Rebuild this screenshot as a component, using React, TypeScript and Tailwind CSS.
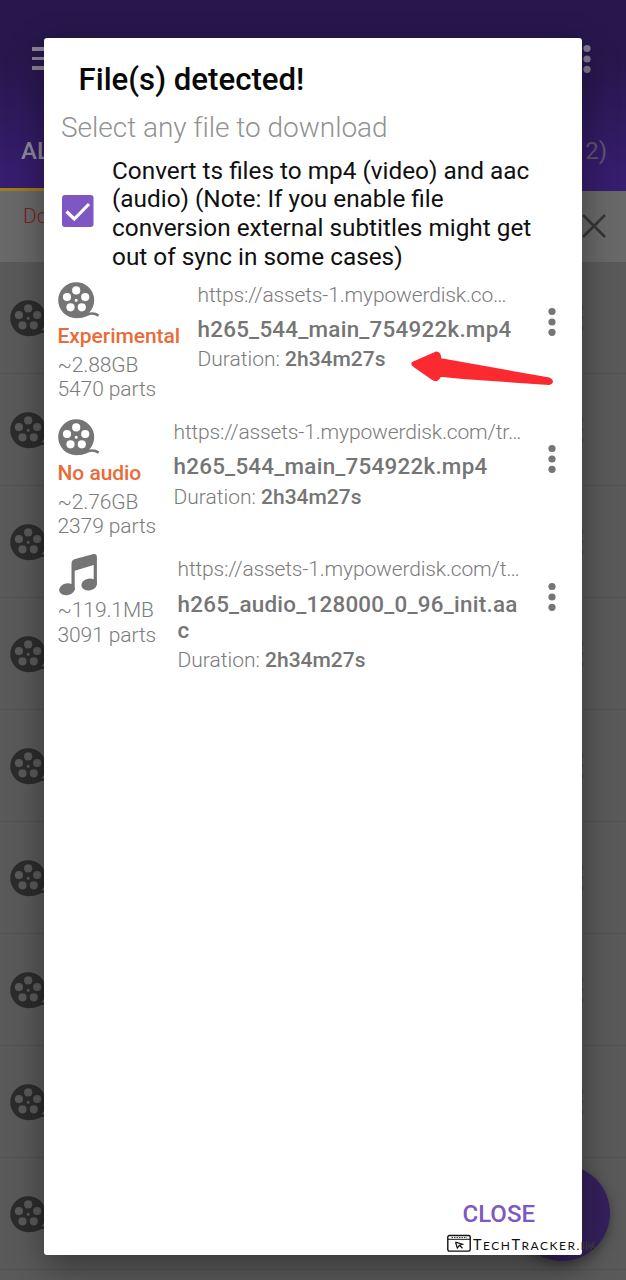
import React from "react";

function Reel({ className }: { className: string }) {
  return (
    <svg viewBox="0 0 42 38" className={className} fill="currentColor">
      <path
        fillRule="evenodd"
        d="M18.2 0.2a18 18 0 1 0 0 36a18 18 0 1 0 0-36ZM18.2 4.3a4.100 4.100 0 1 1 0 8.200a4.100 4.100 0 1 1 0-8.200ZM9 11a4.100 4.100 0 1 1 0 8.200a4.100 4.100 0 1 1 0-8.200ZM27.200 11a4.100 4.100 0 1 1 0 8.200a4.100 4.100 0 1 1 0-8.200ZM12.500 21.200a4.100 4.100 0 1 1 0 8.200a4.100 4.100 0 1 1 0-8.200ZM23.800 21.200a4.100 4.100 0 1 1 0 8.200a4.100 4.100 0 1 1 0-8.200ZM18.200 16.700a1.500 1.500 0 1 1 0 3a1.500 1.500 0 1 1 0-3Z"
      />
      <path d="M18 34.7C26 35.5 29 31.600 34 31.600C37 31.600 38.500 32.200 40.600 33.600" fill="none" stroke="currentColor" strokeWidth="2.5" />
    </svg>
  );
}

function MusicNote() {
  return (
    <svg viewBox="0 0 40 44" className="block h-11 w-10" fill="currentColor">
      <path d="M13.5 9Q13.6 6.300 16.2 5.300L35.600 0Q38.900-.5 38.900 2.800V30.500h-3.200V11L16.7 16.700V36h-3.2Z" />
      <ellipse cx="9" cy="35.300" rx="7.9" ry="5.9" transform="rotate(-12 9 35.300)" />
      <ellipse cx="31.200" cy="30.500" rx="7.9" ry="5.9" transform="rotate(-12 31.200 30.500)" />
    </svg>
  );
}

function Dots({ className }: { className: string }) {
  return (
    <svg viewBox="0 0 8 30" className={className} fill="currentColor">
      <circle cx="4" cy="4.5" r="3.6" />
      <circle cx="4" cy="15" r="3.6" />
      <circle cx="4" cy="25.3" r="3.6" />
    </svg>
  );
}

interface Item {
  kind: "video" | "audio";
  tag?: string;
  size: string;
  parts: string;
  url: string;
  name: string[];
  col: string;
}

const items: Item[] = [
  {
    kind: "video",
    tag: "Experimental",
    size: "~2.88GB",
    parts: "5470 parts",
    url: "https://assets-1.mypowerdisk.co…",
    name: ["h265_544_main_754922k.mp4"],
    col: "w-[140px]",
  },
  {
    kind: "video",
    tag: "No audio",
    size: "~2.76GB",
    parts: "2379 parts",
    url: "https://assets-1.mypowerdisk.com/tr…",
    name: ["h265_544_main_754922k.mp4"],
    col: "w-[116px]",
  },
  {
    kind: "audio",
    size: "~119.1MB",
    parts: "3091 parts",
    url: "https://assets-1.mypowerdisk.com/t…",
    name: ["h265_audio_128000_0_96_init.aa", "c"],
    col: "w-[120px]",
  },
];

function FileRow({ item }: { item: Item }) {
  return (
    <div className="flex h-[137.3px] pl-[14px] text-[21px] font-light text-[#7b7b7b]">
      <div className={`shrink-0 whitespace-nowrap leading-[24.5px] tracking-[-0.1px] ${item.col}`}>
        {item.kind === "video" ? (
          <Reel className="block h-[38px] w-[42px] text-[#757575]" />
        ) : (
          <div className="-mt-[2px] h-[44px] text-[#757575]">
            <MusicNote />
          </div>
        )}
        {item.tag && (
          <div className="mt-[4px] mb-[4.5px] font-medium tracking-[-0.05px] text-[#ea6b3a]">{item.tag}</div>
        )}
        <div>{item.size}</div>
        <div>{item.parts}</div>
      </div>
      <div className="min-w-0 flex-1 whitespace-nowrap">
        <div className="leading-[26px] tracking-[-0.15px]">{item.url}</div>
        <div className="mt-[8.5px] text-[22.4px] font-medium leading-[26.3px] tracking-[0.25px] text-[#757575]">
          {item.name.map((line) => (
            <div key={line}>{line}</div>
          ))}
        </div>
        <div className="mt-[4px] leading-[26px]">
          Duration: <span className="font-medium text-[#757575]">2h34m27s</span>
        </div>
      </div>
      <Dots className="mt-[25.5px] mr-[26px] h-[30px] w-2 shrink-0 text-[#757575]" />
    </div>
  );
}

function Background() {
  return (
    <div className="flex h-full flex-col">
      <header className="flex h-[191px] shrink-0 flex-col bg-linear-to-b from-[#27174c] from-30% to-[#371d6e] to-90%">
        <div className="h-[37px]" />
        <div className="flex h-[84px] items-start justify-between pt-[7px] pr-[35px] pl-8">
          <div className="mt-[3px] flex w-9 flex-col gap-[6px]">
            <i className="h-[3.5px] bg-[#8c8699]" />
            <i className="h-[3.5px] bg-[#8c8699]" />
            <i className="h-[3.5px] bg-[#8c8699]" />
          </div>
          <Dots className="h-[30px] w-2 text-[#827c90]" />
        </div>
        <div className="flex h-[67px] items-start justify-between pt-[14px] pr-[19px] pl-[21px] text-[24px] font-medium leading-[32px]">
          <span className="text-[#8f8b99]">ALL</span>
          <span className="font-normal text-[#61556e]">2)</span>
        </div>
        <div className="h-[3px] w-[120px] bg-[#a17a1d]" />
      </header>
      <div className="flex h-[71px] shrink-0 justify-between bg-[#696969] pt-3 pr-[19px] pl-[23px] text-[21px] font-light leading-[26px] text-[#831d1d]">
        <span>Download</span>
        <svg viewBox="0 0 26 26" className="mt-[10px] h-[26px] w-[26px]" stroke="#363636" strokeWidth="2.6">
          <path d="M2 2L24 24M24 2L2 24" />
        </svg>
      </div>
      {Array.from({ length: 10 }, (_, i) => (
        <div
          key={i}
          className="flex h-28 shrink-0 items-start justify-between border-b border-[#525252] bg-[#5a5a5a] pt-[38px] pr-[43px] pl-[10px] text-[#2c2c2c]"
        >
          <Reel className="h-[38px] w-[42px]" />
          <Dots className="mt-[3px] h-[30px] w-2" />
        </div>
      ))}
    </div>
  );
}

export default function App() {
  return (
    <div className="relative h-[1280px] w-[626px] overflow-hidden bg-[#5a5a5a] font-['Roboto',sans-serif]">
      <Background />
      <div className="absolute top-[1165px] left-[514px] h-24 w-24 rounded-full bg-[#36205d] shadow-[0_4px_12px_rgba(0,0,0,0.35)]" />
      <section className="absolute top-[38px] left-[43.5px] flex h-[1216.5px] w-[538.5px] flex-col rounded-[3px] bg-white shadow-[0_12px_36px_rgba(0,0,0,0.4)]">
        <h1 className="pt-[22.5px] pl-[35px] text-[31.2px] font-medium leading-[38px] text-[#080808]">
          File(s) detected!
        </h1>
        <p className="pt-[11px] pl-[17.5px] text-[28px] font-light leading-[36px] tracking-[-0.03px] text-[#929292]">
          Select any file to download
        </p>
        <label className="mt-[10.5px] flex h-[116px] items-center">
          <svg viewBox="0 0 32 32" className="ml-[18px] mb-[6px] h-8 w-8 shrink-0">
            <rect width="31.5" height="32" rx="3" fill="#7e57c2" />
            <path d="M4.5 16.5L12.3 24L27 9" fill="none" stroke="#fff" strokeWidth="3.2" />
          </svg>
          <span className="ml-[18.5px] text-[24.35px] leading-[28.7px] whitespace-nowrap text-[#101010]">
            Convert ts files to mp4 (video) and aac
            <br />
            (audio) (Note: If you enable file
            <br />
            conversion external subtitles might get
            <br />
            out of sync in some cases)
          </span>
        </label>
        <div className="pt-[9.5px]">
          {items.map((item) => (
            <FileRow key={item.size} item={item} />
          ))}
        </div>
        <button className="mt-auto mr-[47px] mb-[26px] self-end text-[24px] font-medium leading-[30px] text-[#7e57c2]">
          CLOSE
        </button>
      </section>
      <svg viewBox="0 0 144 34" className="absolute top-[350.5px] left-[411px] h-[34px] w-36" fill="#fb2a31" stroke="#fb2a31" strokeWidth="4" strokeLinejoin="round">
        <path d="M2.5 12.5L24 3Q27 1.500 28 5L28.500 9L138 28.500Q142 30.500 138 32L52 26L27 23.500L28 25Q26 30 22 27L4 14.500Q2 13 2.500 12.500Z" />
      </svg>
      <div className="absolute top-[1234px] left-[447px] flex items-start gap-[2px] text-[#111] font-['Lato',sans-serif]">
        <svg viewBox="0 0 24 19" className="h-[19px] w-6" fill="none" stroke="currentColor" strokeWidth="1.4">
          <rect x="0.8" y="1.500" width="22.400" height="15.600" rx="1.500" />
          <path d="M1 5.300H23" strokeWidth="1" />
          <path d="M4.500 3.500H20" strokeWidth="0.8" strokeDasharray="1.500 1" />
          <path d="M8.500 8.200L15.500 10.200L12.500 11.300L15.500 14.200M8.500 8.200L10.300 14L12.200 11.600" strokeWidth="1.2" />
        </svg>
        <span className="mt-[1px] text-[14.5px] leading-[20px] tracking-[1.5px] whitespace-nowrap">
          T<span className="text-[12px]">ECH</span>T<span className="text-[12px]">RACKER.</span>
          <span className="text-[12px] [text-shadow:0_0_1px_#8a8a8a]">IN</span>
        </span>
      </div>
    </div>
  );
}
